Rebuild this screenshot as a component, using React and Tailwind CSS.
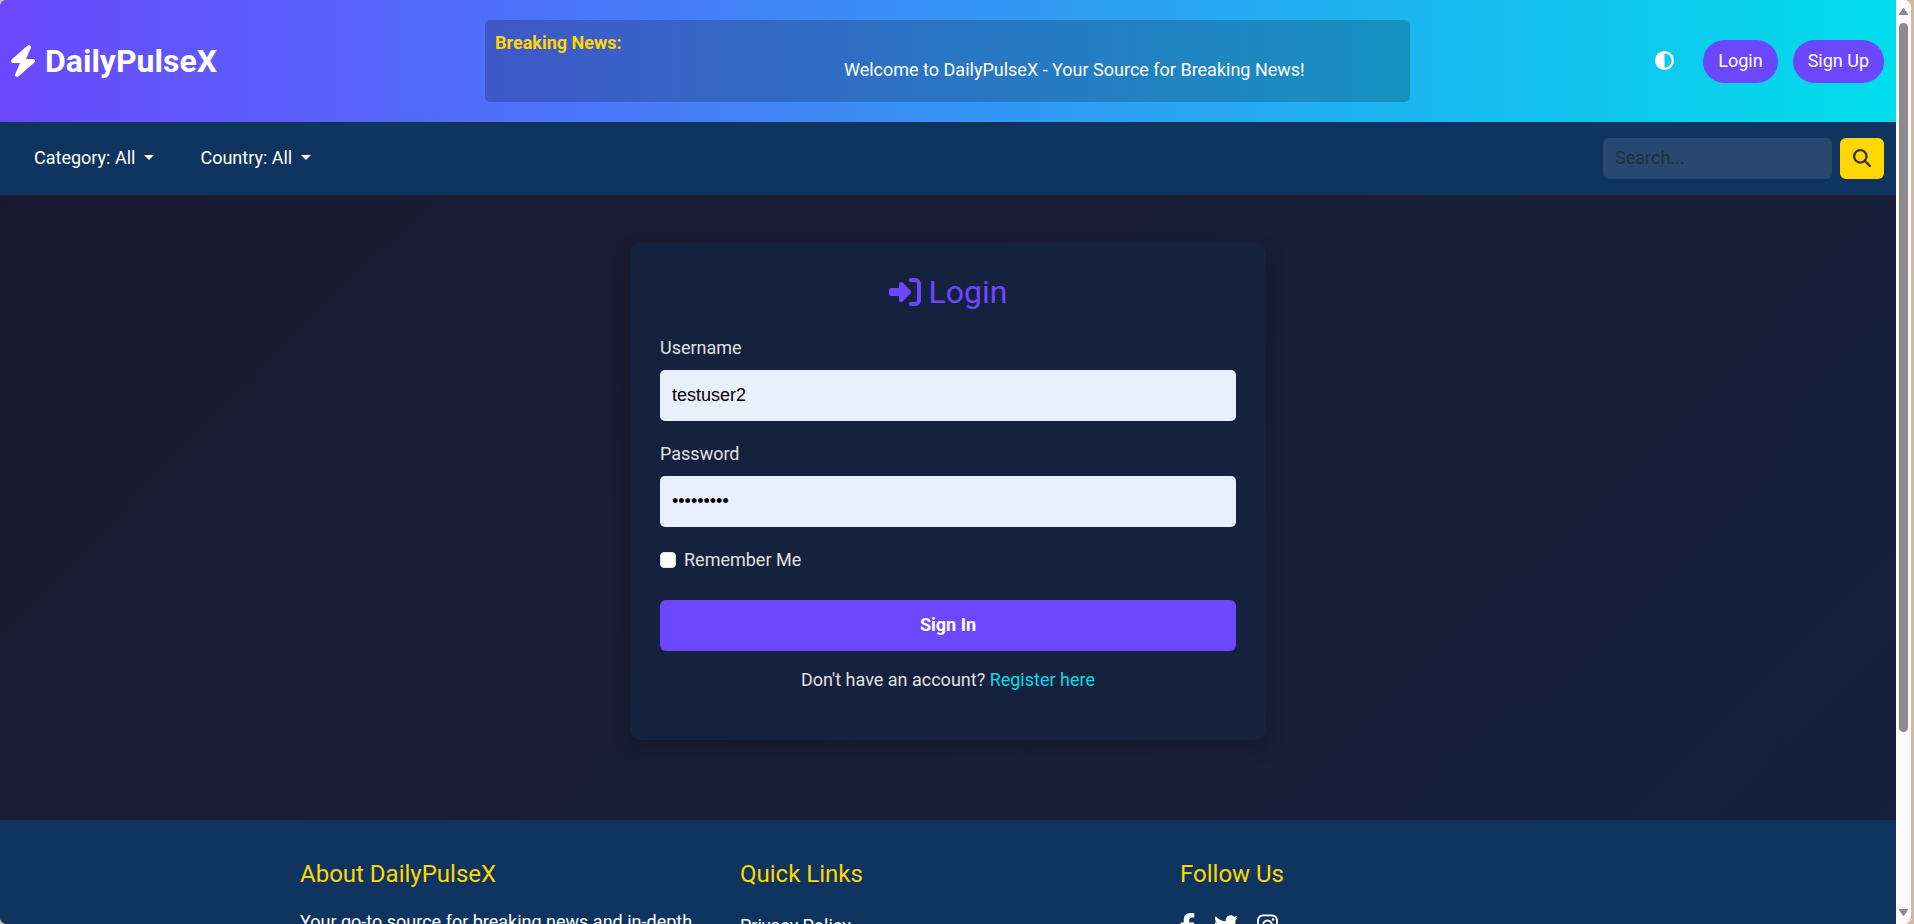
import {
  FaBolt,
  FaCircleHalfStroke,
  FaMagnifyingGlass,
  FaRightToBracket,
  FaFacebookF,
  FaTwitter,
  FaInstagram,
} from "react-icons/fa6";

const pill =
  "rounded-full bg-[#6b48ff] px-[15px] pt-2 pb-[10px] text-lg leading-[25px] text-white";

function Header() {
  return (
    <header className="grid grid-cols-[1fr_2fr_1fr] items-center bg-linear-90/srgb from-[#6b48ff] to-[#00ddeb] py-5">
      <a href="#home" className="flex items-center gap-2 pl-[9px] text-[32px] leading-[48px] font-bold text-white">
        <FaBolt className="size-8 w-7" />
        DailyPulseX
      </a>
      <div className="mr-3 ml-[11px] h-[82px] overflow-hidden rounded-[5px] bg-black/20 p-[10px]">
        <strong className="mb-0.5 block font-bold text-[#ffd700]">Breaking News:</strong>
        <div className="pl-[349px] whitespace-nowrap text-white">
          Welcome to DailyPulseX - Your Source for Breaking News!
        </div>
      </div>
      <div className="flex items-center justify-end gap-[15px] pr-3">
        <button type="button" aria-label="Toggle theme" className="mr-[14px] pb-0.5 text-white">
          <FaCircleHalfStroke className="size-[19px]" />
        </button>
        <a href="#login" className={pill}>Login</a>
        <a href="#signup" className={pill}>Sign Up</a>
      </div>
    </header>
  );
}

function NavMenu({ label }) {
  return (
    <button type="button" className="flex items-center gap-[9px] text-white">
      {label}
      <span className="border-x-[5px] border-t-[5px] border-x-transparent border-t-white" />
    </button>
  );
}

function NavBar() {
  return (
    <nav className="flex items-center justify-between bg-[#0f3460] py-4 pr-3 pl-[34px]">
      <div className="flex gap-[46px] pb-0.5">
        <NavMenu label="Category: All" />
        <NavMenu label="Country: All" />
      </div>
      <form className="flex gap-2">
        <input
          type="search"
          aria-label="Search"
          placeholder="Search..."
          className="h-[41px] w-[229px] rounded-md bg-white/10 px-3 pb-0.5 text-white placeholder:text-[#212529]/75"
        />
        <button
          type="button"
          aria-label="Search"
          className="flex h-[41px] w-11 items-center justify-center rounded-md bg-[#ffd700] pb-0.5 text-[#333333]"
        >
          <FaMagnifyingGlass className="size-[18px]" />
        </button>
      </form>
    </nav>
  );
}

const field =
  "mt-[10px] mb-5 block h-[51px] w-full rounded-[5px] bg-[#e8f0fe] px-3 font-['Liberation_Sans',sans-serif] text-lg text-black";

function LoginCard() {
  return (
    <section className="w-full max-w-[636px] rounded-[10px] bg-[#16213e] p-[30px] text-[#e0e0e0] shadow-[0_8px_20px_rgba(0,0,0,0.2)]">
      <h2 className="mb-6 flex items-center justify-center gap-2 text-[32px] leading-[38px] text-[#6b48ff]">
        <FaRightToBracket className="size-8" />
        Login
      </h2>
      <form>
        <label htmlFor="username" className="block">Username</label>
        <input id="username" type="text" defaultValue="testuser2" className={field} />
        <label htmlFor="password" className="block">Password</label>
        <input id="password" type="password" defaultValue="password1" className={field} />
        <div className="mb-7 flex items-center gap-2">
          <input
            id="remember"
            type="checkbox"
            className="size-4 appearance-none rounded-[4px] border border-[#dee2e6] bg-white"
          />
          <label htmlFor="remember">Remember Me</label>
        </div>
        <button type="button" className="h-[51px] w-full rounded-md bg-[#6b48ff] pb-0.5 font-bold text-white">
          Sign In
        </button>
      </form>
      <p className="mt-4 mb-[18px] text-center">
        Don't have an account? <a href="#register" className="text-[#00ddeb]">Register here</a>
      </p>
    </section>
  );
}

const footerTitle = "text-2xl leading-[29px] text-[#ffd700]";

function Footer() {
  return (
    <footer className="bg-[#0f3460] py-10 text-white">
      <div className="mx-auto grid max-w-[1320px] grid-cols-3">
        <div className="px-3">
          <h5 className={footerTitle}>About DailyPulseX</h5>
          <p className="mt-5">
            Your go-to source for breaking news and in-depth analysis from around the world.
          </p>
        </div>
        <div className="px-3">
          <h5 className={footerTitle}>Quick Links</h5>
          <a href="#privacy" className="mt-6 block">Privacy Policy</a>
        </div>
        <div className="px-3">
          <h5 className={footerTitle}>Follow Us</h5>
          <div className="mt-6 flex gap-[19px]">
            <a href="#facebook" aria-label="Facebook"><FaFacebookF className="h-6 w-[15px]" /></a>
            <a href="#twitter" aria-label="Twitter"><FaTwitter className="size-6" /></a>
            <a href="#instagram" aria-label="Instagram"><FaInstagram className="h-6 w-[21px]" /></a>
          </div>
        </div>
      </div>
    </footer>
  );
}

function ScrollBar() {
  return (
    <div className="flex w-[15px] shrink-0 flex-col items-center bg-[#fcfcfc] py-2" aria-hidden="true">
      <svg className="h-[7px] w-[9px]" viewBox="0 0 9 7" fill="#8b8b8b">
        <path d="M4 .3Q4.500 0 5 .3L9 6V7H0V6Z" />
      </svg>
      <div className="mt-2 flex w-[9px] flex-1">
        <div className="h-4/5 w-full rounded-full bg-[#8b8b8b]" />
      </div>
      <svg className="h-[7px] w-[9px]" viewBox="0 0 9 7" fill="#8b8b8b">
        <path d="M4 6.700Q4.500 7 5 6.700L9 1V0H0V1Z" />
      </svg>
    </div>
  );
}

export default function App() {
  return (
    <div className="h-screen bg-[#d4b8a4] pr-[3px]">
      <div className="flex h-full overflow-hidden rounded-[7px] font-[Roboto,sans-serif] text-lg leading-[25px]">
        <div className="h-full min-w-0 flex-1 overflow-hidden">
          <div className="bg-linear-135/srgb from-[#1a1a2e] to-[#16213e]">
            <Header />
            <NavBar />
            <main className="flex justify-center px-3 pt-12 pb-20">
              <LoginCard />
            </main>
            <Footer />
          </div>
        </div>
        <ScrollBar />
      </div>
    </div>
  );
}
